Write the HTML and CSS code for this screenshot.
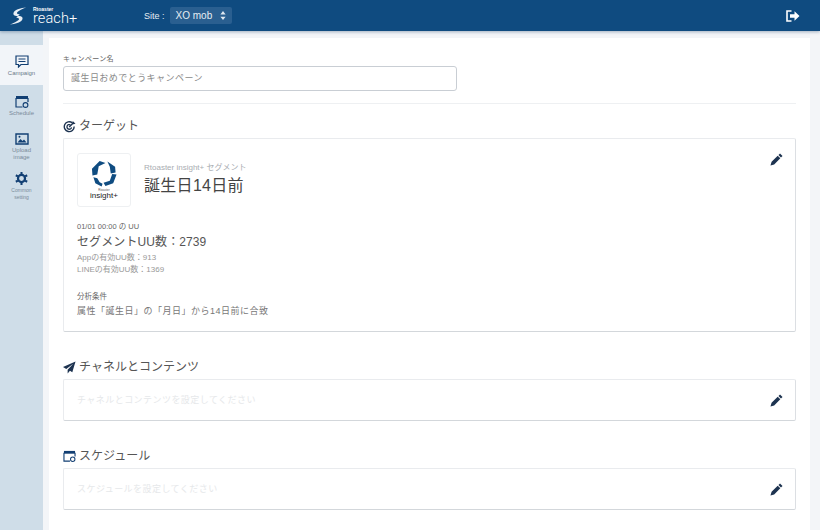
FILE: index.html
```html
<!DOCTYPE html>
<html lang="ja">
<head>
<meta charset="utf-8">
<title>reach+</title>
<link rel="stylesheet" href="styles.css">
</head>
<body>
<header class="topbar">
  <div class="brand">
    <svg class="brand-mark" viewBox="0 0 20 20" width="18" height="18"><path fill="#e8eef4" d="M19 .5C13 1 7.500 2.500 5.500 5.500 4 8 5.500 9.500 8 10l1.500.4 2.500-2-2-.6c-1.300-.5-1.500-1.300-.6-2.300C10.800 3.900 15 2 19 .5z"/><path fill="#e8eef4" d="M1 19.500c6-.5 11.500-2 13.500-5 1.500-2.500 0-4-2.500-4.500l-1.500-.4-2.500 2 2 .6c1.300.5 1.500 1.300.6 2.300C9.200 16.100 5 18 1 19.500z"/></svg>
    <div class="brand-text"><span class="brand-small">Rtoaster</span><span class="brand-name">reach+</span></div>
  </div>
  <div class="site">
    <span class="site-label">Site :</span>
    <span class="site-select">XO mob
      <svg viewBox="0 0 8 12" width="6" height="9"><path fill="#dfe8f0" d="M4 0l3.500 4.500h-7zM4 12L.5 7.500h7z"/></svg>
    </span>
  </div>
  <svg class="logout" viewBox="0 0 14 12" width="14" height="12"><path fill="none" stroke="#fff" stroke-width="1.600" d="M5.500 1H1v10h4.500"/><path fill="#fff" d="M4 4.200h4.500V1.200L13.500 6l-5 4.800V7.800H4z"/></svg>
</header>
<div class="shell">
  <nav class="side">
    <div class="side-top"></div>
    <a class="side-item active">
      <svg viewBox="0 0 14 13" width="14" height="13"><path fill="none" stroke="#123f73" stroke-width="1.200" d="M1 1h12v8.500H6L3.500 12V9.500H1z"/><path stroke="#123f73" d="M3.500 4h7M3.500 6.500h7"/></svg>
      <span>Campaign</span>
    </a>
    <a class="side-item">
      <svg viewBox="0 0 14 13" width="14" height="13"><use href="#cal"/></svg>
      <span>Schedule</span>
    </a>
    <a class="side-item upload">
      <svg viewBox="0 0 14 12" width="14" height="12"><path fill="none" stroke="#123f73" stroke-width="1.400" d="M1 1h12v10H1z"/><path fill="#123f73" d="M2.500 9.500l3-3.500 2 2 1.500-1.500 2.500 3z"/><circle cx="4.500" cy="3.800" r="1" fill="#123f73"/></svg>
      <span>Upload<br>image</span>
    </a>
    <a class="side-item small">
      <svg viewBox="0 0 14 14" width="13" height="13"><circle cx="7" cy="7" r="3.800" fill="none" stroke="#123f73" stroke-width="2.400"/><path stroke="#123f73" stroke-width="2.200" d="M7 0v2.500M7 11.500V14M.9 3.500l2.200 1.300M10.900 9.200l2.200 1.300M.9 10.500l2.200-1.300M10.900 4.800l2.200-1.300"/></svg>
      <span>Common<br>setting</span>
    </a>
  </nav>
  <main class="page">
    <div class="panel">
      <label class="field-label">キャンペーン名</label>
      <div class="input">誕生日おめでとうキャンペーン</div>
      <hr class="rule">

      <h2 class="heading heading-first">
        <svg viewBox="0 0 14 14" width="13" height="13"><path fill="none" stroke="#1d3350" stroke-width="1.500" d="M10 3A5.300 5.300 0 1 0 12 7"/><path fill="none" stroke="#1d3350" stroke-width="1.400" d="M8 5.300A2.500 2.500 0 1 0 9.200 8"/><path stroke="#1d3350" stroke-width="1.500" d="M6.700 7.500L11.500 2.700"/><path fill="#1d3350" d="M10.500 1l3 3-2.500.5-1-1z"/></svg>
        <span>ターゲット</span>
      </h2>
      <section class="card card-target">
        <svg class="edit" viewBox="0 0 14 14" width="13" height="13"><use href="#pen"/></svg>
        <div class="segment">
          <div class="logo-box">
            <svg viewBox="0 0 28 28" width="27" height="27"><path fill="#0f4c81" d="M9 1l6 2-7 3.500L6.500 15 1.500 16 1 9zM17 1.500l8 5.500.500 6-5 1-1-7zM26.500 15L23 24l-8 3-2-3.500 6.500-2L22 14.500zM2.500 18l4 1 2.500 4 3 1.500-1 3L4.500 24z"/></svg>
            <span class="logo-small">Rtoaster</span>
            <span class="logo-name">insight+</span>
          </div>
          <div class="segment-text">
            <div class="segment-kind">Rtoaster insight+ セグメント</div>
            <div class="segment-name">誕生日14日前</div>
          </div>
        </div>
        <div class="stamp">01/01 00:00 の UU</div>
        <div class="count">セグメントUU数：2739</div>
        <div class="sub">Appの有効UU数：913</div>
        <div class="sub">LINEの有効UU数：1369</div>
        <div class="stamp cond-label">分析条件</div>
        <div class="cond">属性「誕生日」の「月日」から14日前に合致</div>
      </section>

      <h2 class="heading heading-channel">
        <svg viewBox="0 0 14 14" width="13" height="13"><path fill="#1d3350" d="M13.500.5L0 6.500l3.500 2L11 3 5 9.500V13.500l2.500-3 2.500 1.500z"/></svg>
        <span>チャネルとコンテンツ</span>
      </h2>
      <section class="card card-empty">
        <span class="placeholder">チャネルとコンテンツを設定してください</span>
        <svg viewBox="0 0 14 14" width="13" height="13"><use href="#pen"/></svg>
      </section>

      <h2 class="heading heading-schedule">
        <svg viewBox="0 0 14 13" width="13" height="12"><use href="#cal"/></svg>
        <span>スケジュール</span>
      </h2>
      <section class="card card-empty">
        <span class="placeholder">スケジュールを設定してください</span>
        <svg viewBox="0 0 14 14" width="13" height="13"><use href="#pen"/></svg>
      </section>
    </div>
  </main>
</div>
<svg class="defs" width="0" height="0">
  <defs>
    <g id="pen"><path fill="#1d3350" d="M10.800.5l2.700 2.700-1.700 1.700-2.700-2.700zM8.300 2.900l2.800 2.800-6.600 6.600L.5 13.500l1.200-4z"/></g>
    <g id="cal"><path fill="#123f73" d="M1 1h12v3H1z"/><path fill="none" stroke="#123f73" stroke-width="1.200" d="M1 3v9h6.500M13 3v4"/><circle cx="10.500" cy="10" r="2.400" fill="none" stroke="#123f73" stroke-width="1.100"/></g>
  </defs>
</svg>
</body>
</html>
```
FILE: styles.css
```css
* { box-sizing: border-box; }
html, body { margin: 0; height: 530px; overflow: hidden; }
body {
  font-family: "Liberation Sans", "Noto Sans CJK JP", sans-serif;
  color: #333;
  background: #f3f5f8;
}
.topbar {
  height: 31px;
  background: #0f4b80;
  color: #fff;
  display: flex;
  align-items: center;
  padding: 0 20px 0 9px;
  box-shadow: 0 1px 3px rgba(15, 50, 90, .35);
  position: relative;
  z-index: 1;
}
.brand { display: flex; align-items: center; gap: 6px; width: 135px; }
.brand-mark { flex: none; }
.brand-text { display: flex; flex-direction: column; line-height: 1; }
.brand-small { font-size: 5px; line-height: 6px; font-weight: 700; }
.brand-name { font-size: 14.500px; line-height: 14px; font-family: "Roboto", sans-serif; font-weight: 300; letter-spacing: .1px; }
.site { display: flex; align-items: center; gap: 5px; font-size: 9px; color: #e6edf3; }
.site-select {
  display: flex; align-items: center; gap: 8px;
  background: #2a5f90; border-radius: 2px;
  height: 17px; padding: 0 6px;
  font-size: 10px;
}
.logout { margin-left: auto; }
.shell { display: flex; height: 499px; }
.side { width: 43px; background: #cfdde8; flex: none; }
.side-top { height: 14px; }
.side-item {
  display: flex; flex-direction: column; align-items: center;
  color: #7a8b9a; font-size: 6px; line-height: 7px; text-align: center;
  height: 40px; padding-top: 10px; gap: 2px;
}
.side-item.active { background: #f2f5f9; color: #6b7a88; }
.side-item.upload { height: 37px; padding-top: 8px; }
.side-item.small { font-size: 5px; line-height: 7px; height: 40px; padding-top: 10px; gap: 2px; }
.page { flex: 1; padding: 7px 10px 0 6px; min-width: 0; }
.panel { background: #fff; height: 492px; padding: 16px 14px 0; }
.field-label { display: block; font-size: 7px; line-height: 10px; color: #666; letter-spacing: .3px; }
.input {
  margin-top: 2px; width: 394px; height: 25px;
  border: 1px solid #c9ced4; border-radius: 3px;
  font-size: 9px; line-height: 23px; padding-left: 7px; color: #8a8a8a; letter-spacing: .45px;
}
.rule { margin: 12px 0 0; border: 0; border-top: 1px solid #eef0f2; }
.heading {
  display: flex; align-items: center; gap: 3px;
  margin: 0; height: 14px;
  font-size: 12px; font-weight: 400; color: #555; line-height: 14px;
}
.heading-first { margin-top: 15px; }
.heading-channel { margin-top: 28px; }
.heading-schedule { margin-top: 28px; }
.card {
  border: 1px solid #e9ebee; border-bottom-color: #d3d7db; border-right-color: #dcdfe3;
  border-radius: 2px; margin-top: 5px; background: #fff;
}
.card-target { position: relative; height: 194px; padding: 13px 13px 0; }
.edit { position: absolute; top: 14px; right: 12px; }
.segment { display: flex; gap: 13px; align-items: center; height: 55px; }
.logo-box {
  width: 54px; height: 54px;
  border: 1px solid #eef0f2; border-radius: 3px;
  display: flex; flex-direction: column; align-items: center; padding-top: 6px;
}
.logo-small { font-size: 3px; line-height: 3px; margin-top: 2px; color: #555; }
.logo-name { font-size: 8px; line-height: 8px; color: #222; }
.segment-text { padding-bottom: 1px; }
.segment-kind { font-size: 8px; line-height: 10px; color: #a9adb2; }
.segment-name { font-size: 16px; line-height: 20px; margin-top: 3px; color: #444; letter-spacing: .3px; }
.stamp { font-size: 7.500px; line-height: 9px; color: #666; margin-top: 15px; }
.count { font-size: 12px; line-height: 16px; color: #555; margin-top: 3px; letter-spacing: .1px; }
.sub { font-size: 8px; line-height: 12px; color: #999; }
.count + .sub { margin-top: 2px; }
.cond-label { margin-top: 16px; }
.cond { font-size: 9px; line-height: 12px; color: #777; margin-top: 4px; letter-spacing: .5px; }
.card-empty {
  height: 42px; display: flex; align-items: center; justify-content: space-between;
  padding: 0 12px 0 13px;
}
.placeholder { font-size: 9px; line-height: 12px; color: #e6e8ea; letter-spacing: .45px; margin-top: -1px; }
.defs { position: absolute; }
```
